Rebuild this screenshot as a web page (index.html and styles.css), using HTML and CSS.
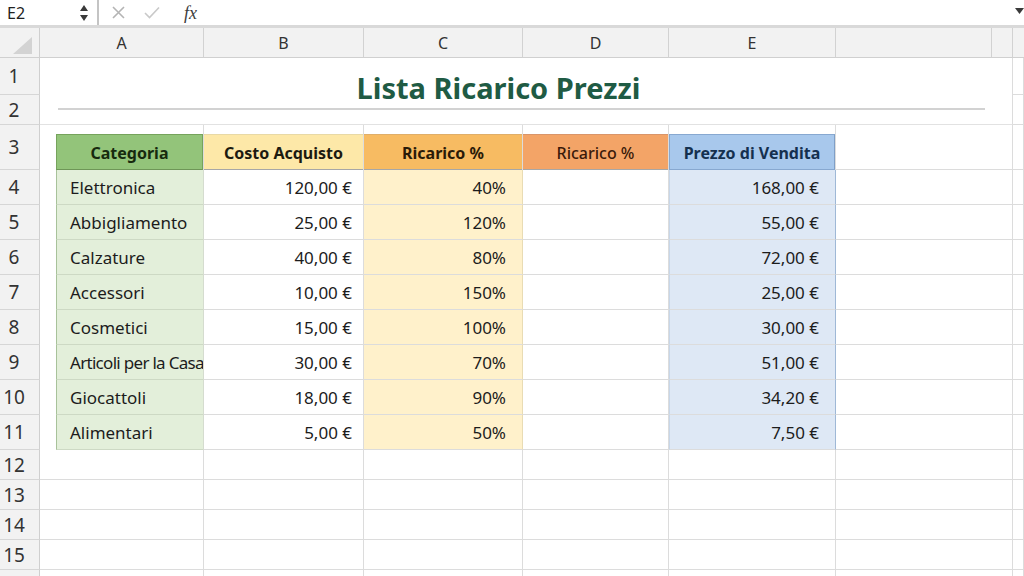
FILE: index.html
```html
<!DOCTYPE html>
<html lang="it">
<head>
<meta charset="utf-8">
<title>Lista Ricarico Prezzi</title>
<link rel="stylesheet" href="styles.css">
</head>
<body>
<div class="fbar">
  <div class="namebox">
    <span class="ref">E2</span>
    <svg class="spin" width="10" height="18" viewBox="0 0 10 18"><path d="M1 7 L5 1 L9 7 Z M1 11 L5 17 L9 11 Z" fill="#3a3a3a"/></svg>
  </div>
  <svg class="ico-x" width="13" height="13" viewBox="0 0 13 13"><path d="M1 1 L12 12 M12 1 L1 12" stroke="#b4b4b4" stroke-width="1.6" fill="none"/></svg>
  <svg class="ico-ok" width="16" height="13" viewBox="0 0 16 13"><path d="M1 7 L5.5 11.5 L15 1.5" stroke="#c9c9c9" stroke-width="1.6" fill="none"/></svg>
  <span class="fx">fx</span>
  <span class="fill"></span>
  <svg class="drop" width="9" height="6" viewBox="0 0 9 6"><path d="M0 0 L9 0 L4.5 6 Z" fill="#3a3a3a"/></svg>
</div>

<div class="sheet">
  <div class="corner"><svg width="19" height="17" viewBox="0 0 19 17"><path d="M19 0 L19 17 L0 17 Z" fill="#d3d3d3"/></svg></div>
  <div class="ch">A</div><div class="ch">B</div><div class="ch">C</div><div class="ch">D</div><div class="ch">E</div><div class="ch"></div><div class="ch"></div><div class="ch last"></div>

  <div class="rh">1</div>
  <div class="title-cell">
    <h1 class="title">Lista Ricarico Prezzi</h1>
    <div class="rule"></div>
  </div>
  <div class="c"></div>
  <div class="rh">2</div>
  <div class="c"></div>

  <div class="rh">3</div>
  <div class="hw hw-a"><div class="th th-a">Categoria</div></div>
  <div class="hw"><div class="th th-b">Costo Acquisto</div></div>
  <div class="hw"><div class="th th-c">Ricarico %</div></div>
  <div class="hw"><div class="th th-d">Ricarico %</div></div>
  <div class="hw"><div class="th th-e">Prezzo di Vendita</div></div>
  <div class="c nr"></div><div class="c"></div><div class="c"></div>

  <div class="rh">4</div>
  <div class="a"><div class="ai">Elettronica</div></div><div class="c num nb">120,00 €</div><div class="c num pc">40%</div><div class="c"></div><div class="c num pe">168,00 €</div><div class="c nr"></div><div class="c"></div><div class="c"></div>
  <div class="rh">5</div>
  <div class="a"><div class="ai">Abbigliamento</div></div><div class="c num nb">25,00 €</div><div class="c num pc">120%</div><div class="c"></div><div class="c num pe">55,00 €</div><div class="c nr"></div><div class="c"></div><div class="c"></div>
  <div class="rh">6</div>
  <div class="a"><div class="ai">Calzature</div></div><div class="c num nb">40,00 €</div><div class="c num pc">80%</div><div class="c"></div><div class="c num pe">72,00 €</div><div class="c nr"></div><div class="c"></div><div class="c"></div>
  <div class="rh">7</div>
  <div class="a"><div class="ai">Accessori</div></div><div class="c num nb">10,00 €</div><div class="c num pc">150%</div><div class="c"></div><div class="c num pe">25,00 €</div><div class="c nr"></div><div class="c"></div><div class="c"></div>
  <div class="rh">8</div>
  <div class="a"><div class="ai">Cosmetici</div></div><div class="c num nb">15,00 €</div><div class="c num pc">100%</div><div class="c"></div><div class="c num pe">30,00 €</div><div class="c nr"></div><div class="c"></div><div class="c"></div>
  <div class="rh">9</div>
  <div class="a"><div class="ai tight">Articoli per la Casa</div></div><div class="c num nb">30,00 €</div><div class="c num pc">70%</div><div class="c"></div><div class="c num pe">51,00 €</div><div class="c nr"></div><div class="c"></div><div class="c"></div>
  <div class="rh">10</div>
  <div class="a"><div class="ai">Giocattoli</div></div><div class="c num nb">18,00 €</div><div class="c num pc">90%</div><div class="c"></div><div class="c num pe">34,20 €</div><div class="c nr"></div><div class="c"></div><div class="c"></div>
  <div class="rh">11</div>
  <div class="a"><div class="ai">Alimentari</div></div><div class="c num nb">5,00 €</div><div class="c num pc">50%</div><div class="c"></div><div class="c num pe">7,50 €</div><div class="c nr"></div><div class="c"></div><div class="c"></div>

  <div class="rh">12</div><div class="c"></div><div class="c"></div><div class="c"></div><div class="c"></div><div class="c"></div><div class="c nr"></div><div class="c"></div><div class="c"></div>
  <div class="rh">13</div><div class="c"></div><div class="c"></div><div class="c"></div><div class="c"></div><div class="c"></div><div class="c nr"></div><div class="c"></div><div class="c"></div>
  <div class="rh">14</div><div class="c"></div><div class="c"></div><div class="c"></div><div class="c"></div><div class="c"></div><div class="c nr"></div><div class="c"></div><div class="c"></div>
  <div class="rh">15</div><div class="c"></div><div class="c"></div><div class="c"></div><div class="c"></div><div class="c"></div><div class="c nr"></div><div class="c"></div><div class="c"></div>
  <div class="rh"></div><div class="c"></div><div class="c"></div><div class="c"></div><div class="c"></div><div class="c"></div><div class="c nr"></div><div class="c"></div><div class="c"></div>
</div>
</body>
</html>
```

FILE: styles.css
```css
* { box-sizing: border-box; margin: 0; padding: 0; }

body {
  width: 1024px;
  height: 576px;
  overflow: hidden;
  background: #ffffff;
  font-family: "Noto Sans", "Open Sans", sans-serif;
  color: #1c1c1c;
}

/* formula bar */
.fbar {
  height: 28px;
  display: flex;
  align-items: center;
  border-bottom: 3px solid #d9d9d9;
  background: #ffffff;
}
.namebox {
  width: 99px;
  height: 25px;
  display: flex;
  align-items: center;
  justify-content: space-between;
  padding: 0 8px 0 7px;
  border-right: 2px solid #c4c4c4;
}
.ref { font-size: 16px; color: #222; }
.spin { display: block; }
.ico-x { margin-left: 13px; }
.ico-ok { margin-left: 19px; }
.fx {
  margin-left: 24px;
  font-family: "Liberation Serif", serif;
  font-style: italic;
  font-size: 18px;
  color: #3c3c3c;
  line-height: 1;
}
.fill { flex: 1; }
.drop { margin-bottom: 4px; }

/* sheet grid */
.sheet {
  display: grid;
  grid-template-columns: 40px 164px 160px 159px 146px 167px 156px 21px 1fr;
  grid-template-rows: 30px 37px 30px 45px repeat(8, 35px) repeat(5, 30px);
}

.corner {
  background: #f2f2f2;
  border-right: 1px solid #cfcfcf;
  border-bottom: 1px solid #d0d0d0;
  display: flex;
  align-items: flex-end;
  justify-content: flex-end;
  padding: 0 7px 3px 0;
}
.corner svg { display: block; }

.ch {
  background: #f2f2f2;
  border-right: 1px solid #d2d2d2;
  border-bottom: 1px solid #d0d0d0;
  display: flex;
  align-items: center;
  justify-content: center;
  font-size: 16px;
  color: #333;
}
.ch.last { border-right: none; }

.rh {
  background: #f2f2f2;
  border-right: 1px solid #cfcfcf;
  border-bottom: 1px solid #d6d6d6;
  display: flex;
  align-items: center;
  justify-content: center;
  padding-right: 11px;
  font-size: 19px;
  color: #333;
}

.c {
  border-right: 1px solid #dcdcdc;
  border-bottom: 1px solid #dcdcdc;
  font-size: 17px;
  display: flex;
  align-items: center;
  white-space: nowrap;
  overflow: hidden;
}
.c.nr { border-right: none; }

/* title */
.title-cell {
  grid-column: 2 / 9;
  grid-row: 2 / 4;
  border-right: 1px solid #dcdcdc;
  border-bottom: 1px solid #e2e2e2;
  display: flex;
  flex-direction: column;
}
.title {
  margin-top: 11px;
  height: 38px;
  line-height: 38px;
  text-align: center;
  padding-right: 55px;
  font-size: 29px;
  font-weight: 700;
  color: #1f5b44;
}
.rule {
  margin: 1px 27px 0 18px;
  height: 2px;
  background: #d2d2d2;
}

/* table header */
.hw {
  padding-top: 9px;
  border-right: 1px solid #dcdcdc;
  display: flex;
}
.hw-a { padding-left: 16px; }
.th {
  flex: 1;
  display: flex;
  align-items: center;
  justify-content: center;
  font-size: 16px;
  font-weight: 700;
  border-top: 1px solid #c9c9c9;
  border-bottom: 1px solid #a7a7a7;
  white-space: nowrap;
  padding-top: 1px;
}
.th-a { background: #93c47a; color: #172a0e; border: 1px solid #76a35c; border-bottom-color: #6e9657; }
.th-b { background: #fde8a8; color: #1c1a10; border-top-color: #e8d9a6; }
.th-c { background: #f7bb62; color: #2a1a08; border-top-color: #dfae69; }
.th-d { background: #f3a467; color: #3a1a0a; font-weight: 500; border-top-color: #d9956a; }
.th-e { background: #a8c8ec; color: #14304f; border: 1px solid #87a8d0; border-right-color: #7f9fc7; }

/* table body */
.a {
  padding-left: 16px;
  border-right: 1px solid #d5dccf;
  display: flex;
}
.ai {
  flex: 1;
  display: flex;
  align-items: center;
  padding-left: 13px;
  background: #e3efda;
  border-left: 1px solid #a8c29a;
  border-bottom: 1px solid #cdd9c4;
  font-size: 17px;
  white-space: nowrap;
  overflow: hidden;
}
.ai.tight { letter-spacing: -0.7px; }
.num { justify-content: flex-end; }
.nb { padding-right: 11px; }
.pc { padding-right: 16px; background: #fff1cb; border-right-color: #e9dcb4; }
.pe { padding-right: 16px; background: #dee8f5; border-right: 1px solid #9fb8d6; border-left: 1px solid #c7d6e8; }
```
